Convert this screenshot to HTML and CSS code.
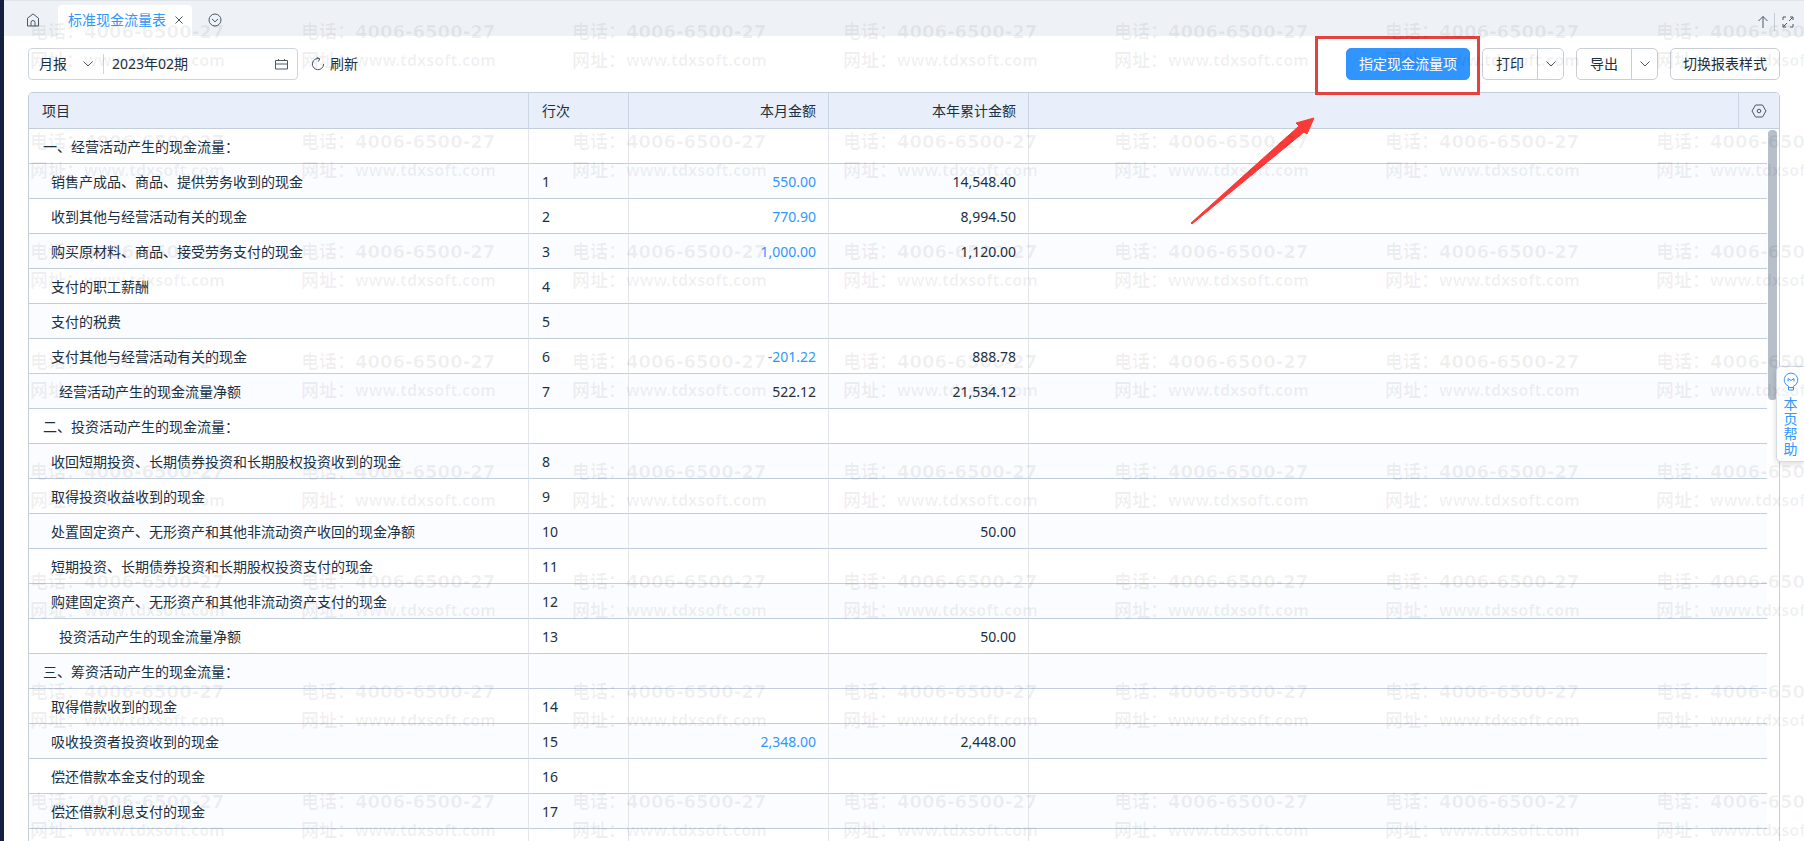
FILE: index.html
```html
<!DOCTYPE html>
<html lang="zh-CN">
<head>
    <meta charset="UTF-8">
    <title>标准现金流量表</title>
    <meta name="viewport" content="width=device-width, initial-scale=1.0">
    <link rel="stylesheet" href="styles.css">
</head>
<body>

<nav class="tabs">
    <a href="#" class="tab-icon home" aria-label="首页">
        <svg width="14" height="14" viewBox="0 0 14 14"><path d="M1.5 5.2 7 .9l5.500 4.300V13h-11zM5 13V9.500a2 2 0 0 1 4 0V13"/></svg>
    </a>
    <div class="tab">
        <a href="#">标准现金流量表</a>
        <button class="tab-close" aria-label="关闭">
            <svg width="8" height="8" viewBox="0 0 8 8"><path d="M.5.5l7 7M7.500.5l-7 7"/></svg>
        </button>
    </div>
    <button class="tab-icon more" aria-label="更多">
        <svg width="14" height="14" viewBox="0 0 14 14"><circle cx="7" cy="7" r="6"/><path d="M4 6l3 2.800L10 6"/></svg>
    </button>
    <div class="tabs-right">
        <button class="tab-icon" aria-label="收起">
            <svg width="12" height="14" viewBox="0 0 12 14"><path d="M6 13V1.500M1.500 6 6 1.500 10.500 6"/></svg>
        </button>
        <button class="tab-icon full" aria-label="全屏">
            <svg width="12" height="12" viewBox="0 0 12 12"><path d="M1 4V1h3M8 1h3v3M11 8v3H8M4 11H1V8M7 5l3.500-3.500M5 7 1.500 10.500"/></svg>
        </button>
    </div>
</nav>

<div class="toolbar">
    <div class="period">
        <select aria-label="报表类型">
            <option>月报</option>
            <option>季报</option>
        </select>
        <svg class="arrow" width="10" height="6" viewBox="0 0 10 6"><path d="M.5.5 5 5 9.500.5"/></svg>
        <input type="text" aria-label="会计期间" value="2023年02期">
        <svg class="calendar" width="13" height="12" viewBox="0 0 13 12"><path d="M.5 2.500h12v8.500H.5zM.5 6h12M3.500 1v2M9.500 1v2"/></svg>
    </div>
    <button class="refresh">
        <svg width="14" height="14" viewBox="0 0 14 14"><path d="M8.500 1.700A5.600 5.600 0 1 0 12.600 7M5.800.5l3 1.300-1.500 2.800"/></svg>
        刷新
    </button>
    <div class="actions">
        <button class="btn primary">指定现金流量项</button>
        <div class="btn-group">
            <button class="btn">打印</button>
            <button class="btn drop" aria-label="打印选项"><svg width="10" height="6" viewBox="0 0 10 6"><path d="M.5.5 5 5 9.500.5"/></svg></button>
        </div>
        <div class="btn-group">
            <button class="btn">导出</button>
            <button class="btn drop" aria-label="导出选项"><svg width="10" height="6" viewBox="0 0 10 6"><path d="M.5.5 5 5 9.500.5"/></svg></button>
        </div>
        <button class="btn">切换报表样式</button>
    </div>
</div>

<main class="report">
    <table class="report-head">
        <colgroup><col class="c-name"><col class="c-no"><col class="c-money"><col class="c-money"><col><col class="c-set"></colgroup>
        <thead>
            <tr>
                <th>项目</th><th>行次</th><th class="num">本月金额</th><th class="num">本年累计金额</th><th></th>
                <th class="set"><button aria-label="列设置"><svg width="16" height="14" viewBox="0 0 16 14"><path d="M4.500 1h7L15 7l-3.500 6h-7L1 7z"/><circle cx="8" cy="7" r="1.800"/></svg></button></th>
            </tr>
        </thead>
    </table>
    <div class="report-scroll">
        <table class="report-body">
            <colgroup><col class="c-name"><col class="c-no"><col class="c-money"><col class="c-money"><col></colgroup>
            <tbody>
                <tr><td>一、经营活动产生的现金流量：</td><td></td><td></td><td></td><td></td></tr>
                <tr><td class="l1">销售产成品、商品、提供劳务收到的现金</td><td>1</td><td class="num"><a href="#">550.00</a></td><td class="num">14,548.40</td><td></td></tr>
                <tr><td class="l1">收到其他与经营活动有关的现金</td><td>2</td><td class="num"><a href="#">770.90</a></td><td class="num">8,994.50</td><td></td></tr>
                <tr><td class="l1">购买原材料、商品、接受劳务支付的现金</td><td>3</td><td class="num"><a href="#">1,000.00</a></td><td class="num">1,120.00</td><td></td></tr>
                <tr><td class="l1">支付的职工薪酬</td><td>4</td><td></td><td></td><td></td></tr>
                <tr><td class="l1">支付的税费</td><td>5</td><td></td><td></td><td></td></tr>
                <tr><td class="l1">支付其他与经营活动有关的现金</td><td>6</td><td class="num"><a href="#">-201.22</a></td><td class="num">888.78</td><td></td></tr>
                <tr><td class="l2">经营活动产生的现金流量净额</td><td>7</td><td class="num">522.12</td><td class="num">21,534.12</td><td></td></tr>
                <tr><td>二、投资活动产生的现金流量：</td><td></td><td></td><td></td><td></td></tr>
                <tr><td class="l1">收回短期投资、长期债券投资和长期股权投资收到的现金</td><td>8</td><td></td><td></td><td></td></tr>
                <tr><td class="l1">取得投资收益收到的现金</td><td>9</td><td></td><td></td><td></td></tr>
                <tr><td class="l1">处置固定资产、无形资产和其他非流动资产收回的现金净额</td><td>10</td><td></td><td class="num">50.00</td><td></td></tr>
                <tr><td class="l1">短期投资、长期债券投资和长期股权投资支付的现金</td><td>11</td><td></td><td></td><td></td></tr>
                <tr><td class="l1">购建固定资产、无形资产和其他非流动资产支付的现金</td><td>12</td><td></td><td></td><td></td></tr>
                <tr><td class="l2">投资活动产生的现金流量净额</td><td>13</td><td></td><td class="num">50.00</td><td></td></tr>
                <tr><td>三、筹资活动产生的现金流量：</td><td></td><td></td><td></td><td></td></tr>
                <tr><td class="l1">取得借款收到的现金</td><td>14</td><td></td><td></td><td></td></tr>
                <tr><td class="l1">吸收投资者投资收到的现金</td><td>15</td><td class="num"><a href="#">2,348.00</a></td><td class="num">2,448.00</td><td></td></tr>
                <tr><td class="l1">偿还借款本金支付的现金</td><td>16</td><td></td><td></td><td></td></tr>
                <tr><td class="l1">偿还借款利息支付的现金</td><td>17</td><td></td><td></td><td></td></tr>
                <tr><td></td><td></td><td></td><td></td><td></td></tr>
            </tbody>
        </table>
        <div class="scrollbar"><div class="thumb"></div></div>
    </div>
</main>

<button class="help">
    <svg width="16" height="20" viewBox="0 0 16 20"><path d="M5.500 14.200a6.800 6.800 0 1 1 5 0v3.800h-5zM5.500 15.500h5M5 9.500V6.500l3 2 3-2v3"/></svg>
    <span>本页帮助</span>
</button>

<div class="mark-box"></div>
<svg class="mark-arrow" width="124" height="108" viewBox="0 0 124 108"><path d="M123 1 105 6l3 3L0 106l1 1L113 15l3 2z"/></svg>

<div class="watermark" id="watermark" aria-hidden="true"></div>

<script>
    const watermark = document.getElementById('watermark');
    for (let i = 0; i < 56; i++) {
        const item = document.createElement('div');
        item.innerHTML = '<p>电话：<b>4006-6500-27</b></p><p>网址：<i>www.tdxsoft.com</i></p>';
        watermark.appendChild(item);
    }
</script>

</body>
</html>
```
FILE: styles.css
```css
:root {
    --blue: #3296fa;
    --text: #1c3040;
    --line: #c3cedb;
    --font: 'Noto Sans', 'Noto Sans CJK SC', sans-serif;
}

* {
    box-sizing: border-box;
}

body {
    margin: 0;
    height: 100vh;
    display: flex;
    flex-direction: column;
    position: relative;
    overflow: hidden;
    border-left: 4px solid #13213f;
    background: #fff;
    color: var(--text);
    font: 14px/20px var(--font);
}

button,
input,
select {
    font: inherit;
    color: inherit;
    background: none;
    border: none;
    padding: 0;
    margin: 0;
}

button {
    cursor: pointer;
}

a {
    color: var(--blue);
    text-decoration: none;
}

svg {
    display: block;
    flex: none;
    fill: none;
    stroke: #4a5866;
}

/* tab bar */
.tabs {
    flex: none;
    display: flex;
    align-items: flex-end;
    height: 36px;
    padding: 0 10px 0 22px;
    background: #eef2f6;
    border-top: 1px solid #e0e5ea;
}

.tab-icon {
    display: flex;
    align-items: center;
    height: 32px;
}

.home {
    margin-right: 18px;
}

.tab {
    display: flex;
    align-items: center;
    gap: 9px;
    height: 31px;
    padding: 0 9px 2px 10px;
    background: #fff;
    border-radius: 4px 4px 0 0;
}

.more {
    margin-left: 16px;
}

.tabs-right {
    display: flex;
    margin-left: auto;
    height: 28px;
    align-items: center;
}

.full {
    height: 18px;
    margin-left: 5px;
    padding-left: 7px;
    border-left: 1px solid #c8ced4;
}

/* toolbar */
.toolbar {
    flex: none;
    display: flex;
    align-items: center;
    height: 56px;
    padding: 0 24px;
}

.period {
    display: flex;
    align-items: center;
    width: 270px;
    height: 32px;
    padding: 0 9px 0 10px;
    border: 1px solid #cfd4da;
    border-radius: 4px;
}

.period select {
    appearance: none;
    width: 44px;
}

.period input {
    flex: 1;
    min-width: 0;
    height: 20px;
    margin-left: 10px;
    padding-left: 8px;
    border-left: 1px solid #cfd4da;
}

.refresh {
    display: flex;
    align-items: center;
    gap: 5px;
    margin-left: 13px;
}

.actions {
    display: flex;
    gap: 12px;
    margin-left: auto;
}

.btn {
    display: flex;
    align-items: center;
    justify-content: center;
    height: 32px;
    padding: 0 12px;
    border: 1px solid #c9ced3;
    border-radius: 5px;
    background: #fff;
}

.primary {
    background: #3195ff;
    border-color: #3195ff;
    color: #fff;
}

.btn-group {
    display: flex;
}

.btn-group .btn:first-child {
    width: 56px;
    border-radius: 5px 0 0 5px;
}

.btn-group .drop {
    width: 27px;
    margin-left: -1px;
    padding: 0;
    border-radius: 0 5px 5px 0;
}

/* report table */
.report {
    flex: 1;
    min-height: 0;
    display: flex;
    flex-direction: column;
    margin: 0 24px;
    border: 1px solid var(--line);
    border-bottom: none;
    border-radius: 5px 5px 0 0;
    overflow: hidden;
}

table {
    width: 100%;
    table-layout: fixed;
    border-collapse: separate;
    border-spacing: 0;
}

.c-name {
    width: 500px;
}

.c-no {
    width: 100px;
}

.c-money {
    width: 200px;
}

.c-set {
    width: 40px;
}

th {
    height: 36px;
    padding: 0 13px;
    background: #e8effa;
    border-right: 1px solid #cbd6e4;
    border-bottom: 1px solid var(--line);
    font-weight: normal;
    text-align: left;
}

td {
    height: 35px;
    padding: 2px 13px 0;
    border-right: 1px solid #e2e6eb;
    border-bottom: 1px solid var(--line);
}

th:last-child,
td:last-child {
    border-right: none;
}

tbody tr:nth-child(even) {
    background: #fafcff;
}

td:first-child {
    padding-left: 14px;
}

td.l1 {
    padding-left: 22px;
}

td.l2 {
    padding-left: 30px;
}

th.num,
td.num {
    padding-right: 12px;
    text-align: right;
}

th.set {
    padding: 0 12px;
}

.set button {
    display: block;
}

.report-scroll {
    flex: 1;
    min-height: 0;
    display: flex;
    align-items: flex-start;
    overflow: hidden;
}

.report-body {
    flex: 1;
}

.scrollbar {
    width: 12px;
    padding: 1px 2px 0 1px;
}

.thumb {
    height: 270px;
    border-radius: 4px;
    background: #b6bfca;
}

/* floating help tab on the right edge */
.help {
    position: absolute;
    right: 0;
    top: 366px;
    width: 28px;
    padding: 5px 0;
    display: flex;
    flex-direction: column;
    align-items: center;
    gap: 4px;
    border: 1px solid #d5dbe2;
    border-right: none;
    border-radius: 5px 0 0 5px;
    background: #fff;
    box-shadow: 0 2px 6px rgba(0, 0, 0, 0.15);
    color: var(--blue);
}

.help svg {
    stroke: var(--blue);
}

.help span {
    width: 14px;
    line-height: 15px;
}

/* red highlight */
.mark-box {
    position: absolute;
    right: 324px;
    top: 36px;
    width: 165px;
    height: 59px;
    border: 3px solid #e5413e;
}

.mark-arrow {
    position: absolute;
    right: 489px;
    top: 117px;
    fill: #f93a38;
    stroke: #f93a38;
}

.watermark {
    position: absolute;
    inset: 0;
    display: grid;
    grid-template-columns: repeat(7, 271px);
    grid-auto-rows: 110px;
    padding: 17px 0 0 26px;
    overflow: hidden;
    pointer-events: none;
    white-space: nowrap;
    color: rgba(0, 0, 0, 0.06);
    font-size: 18px;
    font-weight: bold;
    line-height: 29px;
}

.watermark p {
    display: flex;
    margin: 0;
}

.watermark b {
    font-family: 'DejaVu Sans', sans-serif;
}

.watermark i {
    font-size: 16px;
    font-style: normal;
}
```
